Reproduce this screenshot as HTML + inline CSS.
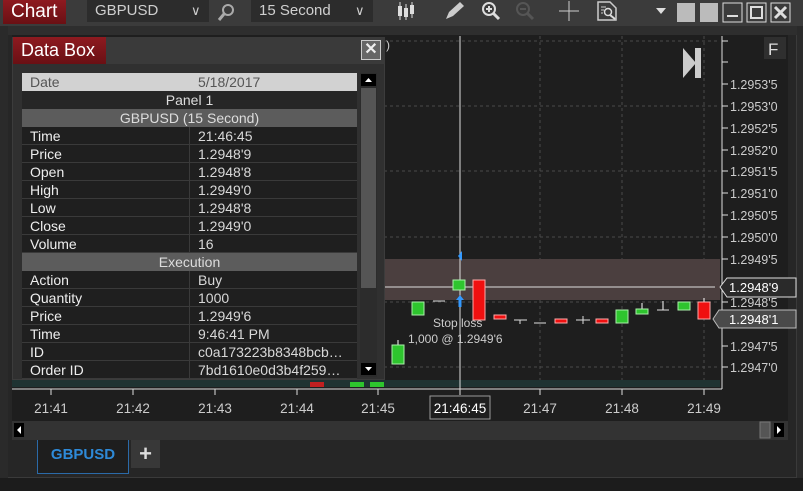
<!DOCTYPE html>
<html><head><meta charset="utf-8"><style>
*{margin:0;padding:0;box-sizing:border-box}
body{width:803px;height:491px;background:#1c1c1c;font-family:"Liberation Sans",sans-serif;position:relative;overflow:hidden;color:#ddd}
.a{position:absolute}
.row{position:absolute;left:22px;width:335px;height:18px;font-size:14px;line-height:18px;border-bottom:1px solid #3a3a3a;background:#1f1f1f;color:#eee}
.row span{position:absolute;left:8px}
.row b{font-weight:normal;position:absolute;left:176px;color:#d8d8d8}
.row i{position:absolute;left:167px;top:0;bottom:0;border-left:1px solid #3a3a3a}
.hd{position:absolute;left:22px;width:335px;height:18px;font-size:14px;line-height:18px;text-align:center}
</style></head><body>
<div class="a" style="left:0;top:0;width:803px;height:478px;background:#2a2a2a"></div>
<div class="a" style="left:8px;top:26px;width:789px;height:452px;background:#262626;border-right:1px solid #3a3a3a;border-bottom:1px solid #3a3a3a"></div>
<div class="a" style="left:0;top:0;width:803px;height:26px;background:#3b3b3b"></div>
<div class="a" style="left:3px;top:0;width:63px;height:24px;background:linear-gradient(#8e1a20,#6a1014);color:#fff;font-size:19px;line-height:23px;padding-left:8px">Chart</div>
<div class="a" style="left:87px;top:0;width:122px;height:22px;background:#2c2c2c;color:#cfcfcf;font-size:15px;line-height:22px;padding-left:8px">GBPUSD<span class="a" style="left:104px;top:0;font-size:13px">&#x2228;</span></div>
<svg class="a" style="left:216px;top:2px" width="20" height="20"><circle cx="12" cy="8" r="5" stroke="#aaa" stroke-width="2" fill="none"/><line x1="8" y1="12" x2="3" y2="18" stroke="#aaa" stroke-width="3"/></svg>
<div class="a" style="left:251px;top:0;width:122px;height:22px;background:#2c2c2c;color:#cfcfcf;font-size:15px;line-height:22px;padding-left:8px">15 Second<span class="a" style="left:104px;top:0;font-size:13px">&#x2228;</span></div>
<svg class="a" style="left:380px;top:0" width="420" height="26" fill="none" stroke="#ddd">
<g stroke-width="1"><line x1="20" y1="2" x2="20" y2="20"/><line x1="26" y1="4" x2="26" y2="20"/><line x1="32" y1="2" x2="32" y2="18"/></g>
<g fill="#ddd" stroke="none"><rect x="18" y="6" width="4" height="10"/><rect x="24" y="8" width="4" height="9"/><rect x="30" y="5" width="4" height="9"/></g>
<path d="M66 19 L69 12 L80 2 L84 6 L73 16 Z" fill="#ccc" stroke="none"/>
<circle cx="109" cy="9" r="6" stroke-width="2"/><line x1="113" y1="13" x2="119" y2="19" stroke-width="3"/><line x1="106" y1="9" x2="112" y2="9" stroke-width="2"/><line x1="109" y1="6" x2="109" y2="12" stroke-width="2"/>
<g stroke="#555"><circle cx="143" cy="9" r="6" stroke-width="2"/><line x1="147" y1="13" x2="153" y2="19" stroke-width="3"/><line x1="140" y1="9" x2="146" y2="9" stroke-width="2"/></g>
<line x1="179" y1="11" x2="199" y2="11" stroke="#ccc"/><line x1="189" y1="1" x2="189" y2="21" stroke="#ccc"/>
<path d="M218 2 H230 L236 8 V20 H218 Z" stroke="#ccc" stroke-width="1.5"/><g stroke="#ccc"><line x1="221" y1="7" x2="226" y2="7"/><line x1="221" y1="10" x2="224" y2="10"/><line x1="221" y1="13" x2="223" y2="13"/></g><circle cx="228" cy="12" r="3.5" stroke-width="1.5"/><line x1="230" y1="15" x2="235" y2="19" stroke-width="2"/>
<path d="M276 8 L286 8 L281 14 Z" fill="#ddd" stroke="none"/>
<rect x="297" y="3" width="18" height="19" fill="#bbb" stroke="none"/><rect x="320" y="3" width="18" height="19" fill="#bbb" stroke="none"/>
<rect x="343" y="3" width="19" height="19"/><line x1="347" y1="16" x2="358" y2="16" stroke-width="2"/>
<rect x="367" y="3" width="19" height="19"/><rect x="371" y="7" width="11" height="11" stroke-width="2"/>
<rect x="391" y="3" width="19" height="19"/><path d="M395 7 L406 18 M406 7 L395 18" stroke-width="3"/>
</svg>
<div class="a" style="left:8px;top:26px;width:789px;height:9px;background:#2e2e2e"></div>
<div class="a" style="left:12px;top:35px;width:776px;height:386px;background:#1e1e1e"></div>
<svg class="a" style="left:0;top:0" width="803" height="440">
<g stroke="#4a4a4a" stroke-dasharray="3,3"><line x1="12" y1="41" x2="720" y2="41"/><line x1="12" y1="106" x2="720" y2="106"/><line x1="12" y1="171" x2="720" y2="171"/><line x1="12" y1="237" x2="720" y2="237"/><line x1="12" y1="302" x2="720" y2="302"/><line x1="12" y1="367" x2="720" y2="367"/>
<line x1="540" y1="36" x2="540" y2="388"/><line x1="622" y1="36" x2="622" y2="388"/><line x1="704" y1="36" x2="704" y2="388"/></g>
<rect x="385" y="259" width="335" height="41" fill="#4b3f3f"/>
<rect x="12" y="380" width="708" height="7" fill="#1f3332"/>
<line x1="460" y1="36" x2="460" y2="389" stroke="#ddd"/>
<line x1="385" y1="287" x2="715" y2="287" stroke="#ddd"/>
<line x1="12" y1="389" x2="722" y2="389" stroke="#ddd"/>
<line x1="722" y1="36" x2="722" y2="389" stroke="#ddd"/>
<g stroke="#ddd"><line x1="51" y1="389" x2="51" y2="395"/><line x1="133" y1="389" x2="133" y2="395"/><line x1="215" y1="389" x2="215" y2="395"/><line x1="297" y1="389" x2="297" y2="395"/><line x1="378" y1="389" x2="378" y2="395"/><line x1="460" y1="389" x2="460" y2="395"/><line x1="540" y1="389" x2="540" y2="395"/><line x1="622" y1="389" x2="622" y2="395"/><line x1="704" y1="389" x2="704" y2="395"/>
<line x1="722" y1="41" x2="728" y2="41"/><line x1="722" y1="62" x2="728" y2="62"/><line x1="722" y1="84" x2="728" y2="84"/><line x1="722" y1="106" x2="728" y2="106"/><line x1="722" y1="128" x2="728" y2="128"/><line x1="722" y1="150" x2="728" y2="150"/><line x1="722" y1="171" x2="728" y2="171"/><line x1="722" y1="193" x2="728" y2="193"/><line x1="722" y1="215" x2="728" y2="215"/><line x1="722" y1="237" x2="728" y2="237"/><line x1="722" y1="259" x2="728" y2="259"/><line x1="722" y1="302" x2="728" y2="302"/><line x1="722" y1="346" x2="728" y2="346"/><line x1="722" y1="367" x2="728" y2="367"/></g>
<g font-size="12.5" fill="#ccc" font-family="Liberation Sans"><text x="730" y="89">1.2953'5</text><text x="730" y="111">1.2953'0</text><text x="730" y="133">1.2952'5</text><text x="730" y="155">1.2952'0</text><text x="730" y="176">1.2951'5</text><text x="730" y="198">1.2951'0</text><text x="730" y="220">1.2950'5</text><text x="730" y="242">1.2950'0</text><text x="730" y="264">1.2949'5</text><text x="730" y="307">1.2948'5</text><text x="730" y="351">1.2947'5</text><text x="730" y="372">1.2947'0</text></g>
<path d="M720 287 L727 278 H796 V297 H727 Z" fill="#2a2a2a" stroke="#ddd"/>
<text x="729" y="292" font-size="13" fill="#fff" font-family="Liberation Sans">1.2948'9</text>
<path d="M713 319 L719 310 H796 V328 H719 Z" fill="#4a4a4a" stroke="#bbb"/>
<text x="729" y="324" font-size="13" fill="#fff" font-family="Liberation Sans">1.2948'1</text>
<rect x="764" y="37" width="22" height="22" fill="#2f2f2f"/><text x="768" y="55" font-size="17" fill="#ddd" font-family="Liberation Sans">F</text>
<path d="M683 48 L696 63 L683 78 Z" fill="#ccc"/><rect x="695" y="48" width="6" height="30" fill="#ccc"/>
<g stroke="#fff" stroke-width="1"><line x1="398" y1="340" x2="398" y2="346"/><line x1="642" y1="303" x2="642" y2="310"/><line x1="663" y1="301" x2="663" y2="310"/><line x1="704" y1="298" x2="704" y2="303"/></g>
<g fill="#2ec52e" stroke="#aaf0aa"><rect x="392" y="345" width="12" height="19"/><rect x="412" y="302" width="12" height="13"/><rect x="453" y="280" width="12" height="10"/><rect x="616" y="310" width="12" height="13"/><rect x="636" y="309" width="12" height="5"/><rect x="678" y="302" width="12" height="8"/></g>
<g fill="#f01010" stroke="#ffaaaa"><rect x="473" y="280" width="12" height="40"/><rect x="494" y="315" width="12" height="4"/><rect x="555" y="319" width="12" height="4"/><rect x="596" y="319" width="12" height="4"/><rect x="698" y="302" width="12" height="17"/></g>
<g stroke="#ddd"><line x1="433" y1="301" x2="445" y2="301"/><line x1="514" y1="320" x2="527" y2="320"/><line x1="520" y1="320" x2="520" y2="324"/><line x1="534" y1="323" x2="546" y2="323"/><line x1="576" y1="320" x2="590" y2="320"/><line x1="583" y1="316" x2="583" y2="324"/><line x1="657" y1="310" x2="669" y2="310"/></g>
<path d="M462 251 L458 256 L462 261 Z" fill="#3399ff"/>
<path d="M460 295 L456 300 H458.5 V307 H461.5 V300 H464 Z" fill="#3399ff"/>
<rect x="310" y="382" width="14" height="5" fill="#c02020"/><rect x="350" y="382" width="14" height="5" fill="#2ec52e"/><rect x="370" y="382" width="14" height="5" fill="#2ec52e"/>
<text x="433" y="327" font-size="12" fill="#ccc" font-family="Liberation Sans">Stop loss</text>
<text x="408" y="343" font-size="12" fill="#ccc" font-family="Liberation Sans">1,000 @ 1.2949'6</text>
<g font-size="13.5" fill="#ccc" font-family="Liberation Sans" text-anchor="middle"><text x="51" y="413">21:41</text><text x="133" y="413">21:42</text><text x="215" y="413">21:43</text><text x="297" y="413">21:44</text><text x="378" y="413">21:45</text><text x="540" y="413">21:47</text><text x="622" y="413">21:48</text><text x="704" y="413">21:49</text></g>
<rect x="430" y="396" width="60" height="23" fill="#1e1e1e" stroke="#999"/>
<text x="460" y="413" font-size="13.5" fill="#fff" font-family="Liberation Sans" text-anchor="middle">21:46:45</text>
<rect x="12" y="421" width="776" height="19" fill="#333"/>
<rect x="14" y="423" width="10" height="14" fill="#000"/><path d="M21 426 L17 430 L21 434 Z" fill="#fff"/>
<rect x="760" y="422" width="10" height="16" fill="#555" stroke="#777"/>
<rect x="774" y="423" width="10" height="14" fill="#000"/><path d="M777 426 L781 430 L777 434 Z" fill="#fff"/>
</svg>
<div class="a" style="left:37px;top:440px;width:92px;height:34px;background:#1e1e1e;border:1px solid #2b6aa8;border-top:none;color:#2e8ad8;font-weight:bold;font-size:15px;line-height:30px;text-align:center">GBPUSD</div>
<div class="a" style="left:131px;top:440px;width:29px;height:28px;background:#383838;color:#ddd;font-weight:bold;font-size:22px;line-height:27px;text-align:center">+</div>
<div class="a" style="left:12px;top:37px;width:373px;height:343px;background:#303030;border:1px solid #3c3c3c"></div>
<div class="a" style="left:12px;top:37px;width:373px;height:27px;background:#3a3a3a"></div>
<div class="a" style="left:13px;top:37px;width:93px;height:27px;background:linear-gradient(#8e1a20,#6a1014);color:#fff;font-size:18px;line-height:26px;padding-left:8px">Data Box</div>
<div class="a" style="left:361px;top:40px;width:20px;height:20px;border:1px solid #ccc;background:#666;color:#eee;font-size:16px;line-height:18px;text-align:center;font-weight:bold">✕</div>
<div class="a" style="left:386px;top:38px;color:#ccc;font-size:12px">)</div>
<div class="hd" style="top:73px;background:#d2d2d2;color:#555;text-align:left"><span style="position:absolute;left:8px">Date</span><span style="position:absolute;left:176px">5/18/2017</span></div>
<div class="hd" style="top:91px;background:#262626;color:#ddd">Panel 1</div>
<div class="hd" style="top:109px;background:#5c5c5c;color:#ddd">GBPUSD (15 Second)</div>
<div class="row" style="top:127px"><span>Time</span><i></i><b>21:46:45</b></div>
<div class="row" style="top:145px"><span>Price</span><i></i><b>1.2948'9</b></div>
<div class="row" style="top:163px"><span>Open</span><i></i><b>1.2948'8</b></div>
<div class="row" style="top:181px"><span>High</span><i></i><b>1.2949'0</b></div>
<div class="row" style="top:199px"><span>Low</span><i></i><b>1.2948'8</b></div>
<div class="row" style="top:217px"><span>Close</span><i></i><b>1.2949'0</b></div>
<div class="row" style="top:235px"><span>Volume</span><i></i><b>16</b></div>
<div class="hd" style="top:253px;background:#5c5c5c;color:#ddd">Execution</div>
<div class="row" style="top:271px"><span>Action</span><i></i><b>Buy</b></div>
<div class="row" style="top:289px"><span>Quantity</span><i></i><b>1000</b></div>
<div class="row" style="top:307px"><span>Price</span><i></i><b>1.2949'6</b></div>
<div class="row" style="top:325px"><span>Time</span><i></i><b>9:46:41 PM</b></div>
<div class="row" style="top:343px"><span>ID</span><i></i><b>c0a173223b8348bcb…</b></div>
<div class="row" style="top:361px"><span>Order ID</span><i></i><b>7bd1610e0d3b4f259…</b></div>
<div class="a" style="left:360px;top:73px;width:17px;height:304px;background:#2c2c2c"></div>
<div class="a" style="left:361px;top:74px;width:15px;height:12px;background:#000"></div>
<svg class="a" style="left:361px;top:74px" width="15" height="12"><path d="M4 8 L7.5 4 L11 8 Z" fill="#fff"/></svg>
<div class="a" style="left:361px;top:88px;width:15px;height:200px;background:#555"></div>
<div class="a" style="left:361px;top:363px;width:15px;height:12px;background:#000"></div>
<svg class="a" style="left:361px;top:363px" width="15" height="12"><path d="M4 4 L7.5 8 L11 4 Z" fill="#fff"/></svg>
</body></html>
